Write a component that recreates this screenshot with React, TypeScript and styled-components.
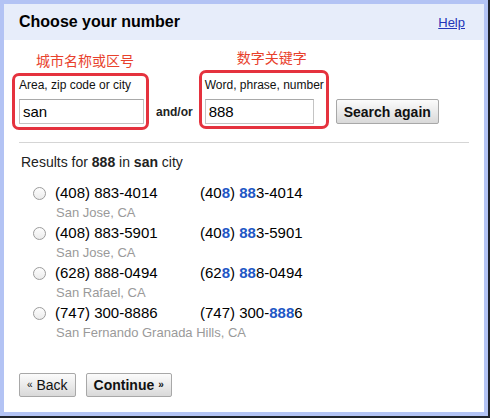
import React, {useState} from 'react';
import styled, {createGlobalStyle} from 'styled-components';

const GlobalStyle = createGlobalStyle`
  html, body {
    margin: 0;
    padding: 0;
    background: #1f232b;
  }
  body {
    font-family: "Liberation Sans", Arial, Helvetica, "Noto Sans CJK SC", sans-serif;
    color: #111;
  }
`;

type Result = {
    id: string;
    parts: [string, boolean][];
    city: string;
};

const results: Result[] = [
    {id: '1', parts: [['(40', false], ['8', true], [') ', false], ['88', true], ['3-4014', false]], city: 'San Jose, CA'},
    {id: '2', parts: [['(40', false], ['8', true], [') ', false], ['88', true], ['3-5901', false]], city: 'San Jose, CA'},
    {id: '3', parts: [['(62', false], ['8', true], [') ', false], ['88', true], ['8-0494', false]], city: 'San Rafael, CA'},
    {id: '4', parts: [['(747) 300-', false], ['888', true], ['6', false]], city: 'San Fernando Granada Hills, CA'},
];

const plain = (r: Result) => r.parts.map(p => p[0]).join('');

export default function App() {
    const [area, setArea] = useState('san');
    const [word, setWord] = useState('888');
    const [picked, setPicked] = useState('');

    return (
        <>
            <GlobalStyle/>
            <Frame>
                <Header>
                    <Title>Choose your number</Title>
                    <HelpLink href="#">Help</HelpLink>
                </Header>
                <Body>
                    <SearchRow>
                        <Field $width={125}>
                            <Caption $left={17} $top={-24}>城市名称或区号</Caption>
                            <Outline $top={-4} $left={-7} $right={-5} $bottom={-6}/>
                            <FieldLabel>Area, zip code or city</FieldLabel>
                            <TextInput value={area} onChange={e => setArea(e.target.value)} $width={125}/>
                        </Field>
                        <AndOr>and/or</AndOr>
                        <Field $width={119}>
                            <Caption $left={32} $top={-27}>数字关键字</Caption>
                            <Outline $top={-7} $left={-6} $right={-5} $bottom={-5}/>
                            <FieldLabel>Word, phrase, number</FieldLabel>
                            <TextInput value={word} onChange={e => setWord(e.target.value)} $width={109}/>
                        </Field>
                        <Btn $height={25} $bold>Search again</Btn>
                    </SearchRow>

                    <Divider/>

                    <ResultsFor>
                        Results for <b>888</b> in <b>san</b> city
                    </ResultsFor>

                    <List>
                        {results.map(r => (
                            <Row key={r.id}>
                                <Radio
                                    type="radio"
                                    name="number"
                                    checked={picked === r.id}
                                    onChange={() => setPicked(r.id)}
                                />
                                <Phone>{plain(r)}</Phone>
                                <Phone>
                                    {r.parts.map(([text, hit], i) =>
                                        hit ? <Hit key={i}>{text}</Hit> : <span key={i}>{text}</span>
                                    )}
                                </Phone>
                                <City>{r.city}</City>
                            </Row>
                        ))}
                    </List>

                    <Actions>
                        <Btn $height={24}><Guillemet>«</Guillemet> Back</Btn>
                        <Btn $height={24} $bold>Continue <Guillemet>»</Guillemet></Btn>
                    </Actions>
                </Body>
            </Frame>
        </>
    );
}

const Frame = styled.div`
  width: 488px;
  box-sizing: border-box;
  border: 4px solid #b3c3f4;
  background: #fff;
`;

const Header = styled.div`
  height: 36px;
  background: #e7edfa;
  display: flex;
  align-items: center;
  justify-content: space-between;
  padding: 0 19px 0 15px;
`;

const Title = styled.h1`
  margin: 0;
  font-size: 16px;
  font-weight: bold;
  color: #000;
`;

const HelpLink = styled.a`
  font-size: 13px;
  color: #2233b8;
  text-decoration: underline;
  margin-top: 1px;
`;

const Body = styled.div`
  padding: 37px 15px 15px 15px;
  display: flex;
  flex-direction: column;
`;

const SearchRow = styled.div`
  display: flex;
  align-items: flex-end;
  gap: 12px;
`;

const Field = styled.div<{ $width: number }>`
  position: relative;
  width: ${p => p.$width}px;
  display: flex;
  flex-direction: column;
`;

const Caption = styled.span<{ $left: number; $top: number }>`
  position: absolute;
  left: ${p => p.$left}px;
  top: ${p => p.$top}px;
  font-family: "Noto Sans CJK SC", sans-serif;
  font-size: 14px;
  line-height: 14px;
  color: #e8412c;
  white-space: nowrap;
`;

const Outline = styled.div<{ $top: number; $left: number; $right: number; $bottom: number }>`
  position: absolute;
  top: ${p => p.$top}px;
  left: ${p => p.$left}px;
  right: ${p => p.$right}px;
  bottom: ${p => p.$bottom}px;
  border: 3px solid #e5323e;
  border-radius: 7px;
  pointer-events: none;
`;

const FieldLabel = styled.label`
  font-size: 12px;
  line-height: 16px;
  margin-bottom: 6px;
  white-space: nowrap;
  color: #111;
`;

const TextInput = styled.input<{ $width: number }>`
  box-sizing: border-box;
  width: ${p => p.$width}px;
  height: 25px;
  margin: 0;
  padding: 0 3px;
  border: 1px solid #c4c4c4;
  border-top-color: #a9a9a9;
  font-family: "Liberation Sans", Arial, sans-serif;
  font-size: 15px;
  color: #000;
  outline: none;
`;

const AndOr = styled.span`
  font-size: 12px;
  font-weight: bold;
  line-height: 16px;
  margin-bottom: 4px;
  color: #222;
`;

const Btn = styled.button<{ $height: number; $bold?: boolean }>`
  box-sizing: border-box;
  height: ${p => p.$height}px;
  padding: 0 7px;
  margin: 0;
  border: 1px solid #a8a8a8;
  border-radius: 2px;
  background: linear-gradient(#fbfbfb, #e9e9e9 55%, #d9d9d9);
  font-family: "Liberation Sans", Arial, sans-serif;
  font-size: 14px;
  font-weight: ${p => (p.$bold ? 'bold' : 'normal')};
  color: #111;
  white-space: nowrap;
  cursor: pointer;
`;

const Guillemet = styled.span`
  font-size: 10px;
  vertical-align: 2px;
`;

const Divider = styled.hr`
  margin: 18px 0 0;
  border: 0;
  height: 1px;
  background: #d5d5d5;
`;

const ResultsFor = styled.p`
  margin: 11px 0 0 2px;
  font-size: 14px;
  line-height: 16px;
  color: #222;
`;

const List = styled.div`
  margin-top: 13px;
  padding-left: 14px;
  display: flex;
  flex-direction: column;
`;

const Row = styled.div`
  display: grid;
  grid-template-columns: 22px 145px 1fr;
  grid-template-rows: 20px 20px;
  align-items: center;
`;

const Radio = styled.input`
  appearance: none;
  box-sizing: border-box;
  width: 13px;
  height: 13px;
  margin: 0;
  border: 1px solid #9c9c9c;
  border-radius: 50%;
  background: linear-gradient(#fdfdfd, #ececec);

  &:checked {
    background: radial-gradient(circle, #333 30%, #f4f4f4 36%);
  }
`;

const Phone = styled.span`
  font-size: 15px;
  line-height: 20px;
  color: #000;
  white-space: nowrap;
`;

const Hit = styled.b`
  color: #2156c5;
`;

const City = styled.span`
  grid-column: 2 / 4;
  font-size: 13px;
  line-height: 20px;
  color: #9a9a9a;
  padding-left: 1px;
`;

const Actions = styled.div`
  margin-top: 30px;
  display: flex;
  gap: 10px;
`;
